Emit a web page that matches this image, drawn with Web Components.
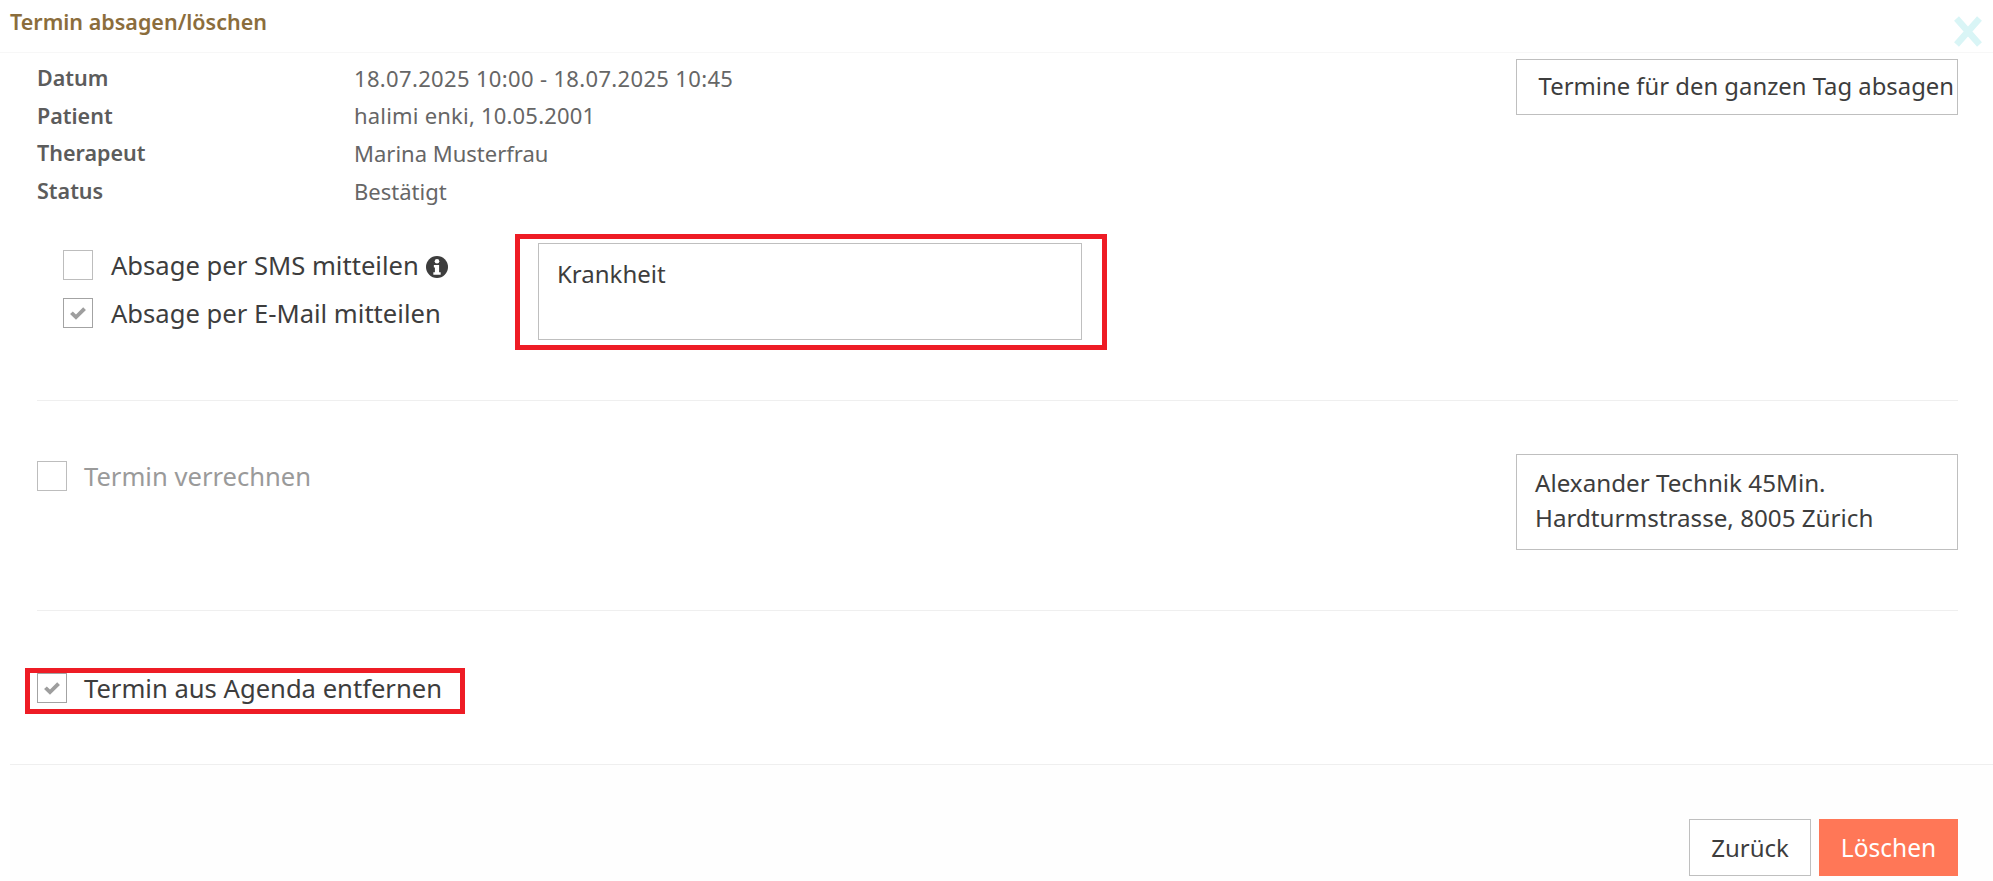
<!DOCTYPE html>
<html lang="de">
<head>
<meta charset="utf-8">
<title>Termin absagen/löschen</title>
<style>
    html, body { margin: 0; background: #fff; }
    body { font-family: "Noto Sans", "Open Sans", sans-serif; color: #3d3d3d; }
</style>
</head>
<body>
<cancel-dialog></cancel-dialog>

<script>
class checkRow extends HTMLElement {
    constructor() {
        super();
        this.attachShadow({ mode: 'open' });
        this.shadowRoot.innerHTML = `
            <style>
                :host {
                    display: flex;
                    align-items: center;
                    gap: var(--check-gap, 17px);
                    font-size: 25.6px;
                    line-height: 29px;
                    color: #3d3d3d;
                }
                :host([disabled]) { color: #9a9a9a; }
                .box {
                    box-sizing: border-box;
                    flex: none;
                    width: 30px;
                    height: 30px;
                    border: 1px solid #bdbdbd;
                    background: #fff;
                    display: grid;
                    place-items: center;
                }
                :host([checked]) .box { border-color: #a3a3a3; }
                svg { display: none; width: 18px; height: 15px; }
                :host([checked]) svg { display: block; }
            </style>
            <span class="box">
                <svg viewBox="0 0 17 14"><path d="M1 7.5 3.6 5l3 3L13.4 1 16 3.6 6.6 13z" fill="#9e9e9e"/></svg>
            </span>
            <slot></slot>
        `;
    }
}

class infoRow extends HTMLElement {
    constructor() {
        super();
        this.attachShadow({ mode: 'open' });
        this.shadowRoot.innerHTML = `
            <style>
                :host {
                    display: grid;
                    grid-template-columns: 317px 1fr;
                    height: 37.6px;
                    align-items: center;
                    font-size: 22px;
                    color: #666;
                }
                .label { font-size: 21.5px; font-weight: 600; color: #5c5c5c; }
            </style>
            <span class="label"></span>
            <span><slot></slot></span>
        `;
    }

    connectedCallback() {
        this.shadowRoot.querySelector('.label').textContent = this.getAttribute('label');
    }
}

class outlineBox extends HTMLElement {
    constructor() {
        super();
        this.attachShadow({ mode: 'open' });
        this.shadowRoot.innerHTML = `
            <style>
                :host {
                    display: block;
                    box-sizing: border-box;
                    border: 1px solid #bfbfbf;
                    background: #fff;
                    font-size: 24px;
                    color: #3d3d3d;
                }
            </style>
            <slot></slot>
        `;
    }
}

class cancelDialog extends HTMLElement {
    constructor() {
        super();
        this.attachShadow({ mode: 'open' });
        this.shadowRoot.innerHTML = `
            <style>
                :host {
                    display: block;
                    height: 881px;
                    overflow: hidden;
                    background: #fff;
                }
                .head {
                    display: flex;
                    justify-content: space-between;
                    height: 53px;
                    box-sizing: border-box;
                    padding: 9px 11px 0 10px;
                    border-bottom: 1px solid #f7f7f7;
                }
                .title {
                    font-size: 21.5px;
                    line-height: 26px;
                    font-weight: 600;
                    color: #8b6d3c;
                }
                .close { width: 28px; height: 31px; margin-top: 7px; }
                .body { padding: 6px 35px 0 37px; }
                .top {
                    display: flex;
                    justify-content: space-between;
                    align-items: flex-start;
                    height: 175px;
                }
                .day {
                    width: 442px;
                    height: 56px;
                    display: flex;
                    align-items: center;
                    justify-content: flex-end;
                    padding: 0 3px 2px 0;
                    font-size: 23.85px;
                }
                .notify {
                    display: flex;
                    align-items: flex-start;
                    height: 166px;
                    border-bottom: 1px solid #efefef;
                }
                .checks {
                    display: grid;
                    gap: 18px;
                    width: 478px;
                    padding: 16px 0 0 26px;
                    box-sizing: border-box;
                    --check-gap: 18px;
                }
                .mark { border: 5px solid #ee1c25; }
                .reason-wrap { padding: 4px 20px 5px 18px; }
                .reason {
                    width: 544px;
                    height: 97px;
                    padding: 13px 18px;
                }
                .info-icon { width: 22px; height: 22px; vertical-align: -3px; margin-left: 1px; }
                .bill {
                    display: flex;
                    justify-content: space-between;
                    align-items: flex-start;
                    height: 210px;
                    padding-top: 53px;
                    box-sizing: border-box;
                    border-bottom: 1px solid #efefef;
                }
                .bill check-row { margin-top: 7px; }
                .service {
                    width: 442px;
                    height: 96px;
                    padding: 10px 18px;
                    line-height: 35px;
                    font-size: 24.2px;
                }
                .remove { padding-top: 57px; height: 153px; box-sizing: border-box; }
                .remove .mark {
                    display: inline-block;
                    margin-left: -12px;
                    padding: 0 18px 6px 7px;
                }
                .foot {
                    border-top: 1px solid #efefef;
                    margin-left: 10px;
                    height: 117px;
                    box-sizing: border-box;
                    padding: 54px 35px 0 0;
                    display: flex;
                    justify-content: flex-end;
                    gap: 8px;
                    background: #fefefe;
                }
                button {
                    height: 57px;
                    box-sizing: border-box;
                    font: inherit;
                    font-size: 24px;
                    padding: 0;
                    border: 1px solid #bfbfbf;
                    background: #fff;
                    color: #3d3d3d;
                    width: 122px;
                }
                .danger {
                    width: 139px;
                    border: 0;
                    background: #ff7757;
                    color: #fff;
                    font-size: 24.5px;
                }
            </style>
            <div class="head">
                <span class="title">Termin absagen/löschen</span>
                <svg class="close" viewBox="0 0 28 31">
                    <path d="M2.5 2.500 25.500 28.500M25.500 2.500 2.500 28.500" stroke="#d9f5f6" stroke-width="6.500" fill="none"/>
                </svg>
            </div>
            <div class="body">
                <div class="top">
                    <div>
                        <info-row label="Datum"><span style="letter-spacing: .34px">18.07.2025 10:00 - 18.07.2025 10:45</span></info-row>
                        <info-row label="Patient"><span style="letter-spacing: .2px">halimi enki, 10.05.2001</span></info-row>
                        <info-row label="Therapeut">Marina Musterfrau</info-row>
                        <info-row label="Status">Bestätigt</info-row>
                    </div>
                    <outline-box class="day">Termine für den ganzen Tag absagen</outline-box>
                </div>
                <div class="notify">
                    <div class="checks">
                        <check-row>
                            <span>Absage per SMS mitteilen
                                <svg class="info-icon" viewBox="0 0 21 21">
                                    <circle cx="10.5" cy="10.5" r="10.5" fill="#3d3d3d"/>
                                    <circle cx="10.5" cy="5" r="2.2" fill="#fff"/>
                                    <path d="M7.5 8.500h5v7h1.500v2.500H7v-2.500h1.500v-4.500h-1z" fill="#fff"/>
                                </svg>
                            </span>
                        </check-row>
                        <check-row checked>Absage per E-Mail mitteilen</check-row>
                    </div>
                    <div class="mark reason-wrap">
                        <outline-box class="reason">Krankheit</outline-box>
                    </div>
                </div>
                <div class="bill">
                    <check-row disabled style="--check-gap: 17px">Termin verrechnen</check-row>
                    <outline-box class="service">Alexander Technik 45Min.<br>Hardturmstrasse, 8005 Zürich</outline-box>
                </div>
                <div class="remove">
                    <div class="mark">
                        <check-row checked>Termin aus Agenda entfernen</check-row>
                    </div>
                </div>
            </div>
            <div class="foot">
                <button>Zurück</button>
                <button class="danger">Löschen</button>
            </div>
        `;
    }
}

window.customElements.define('check-row', checkRow);
window.customElements.define('info-row', infoRow);
window.customElements.define('outline-box', outlineBox);
window.customElements.define('cancel-dialog', cancelDialog);
</script>
</body>
</html>
